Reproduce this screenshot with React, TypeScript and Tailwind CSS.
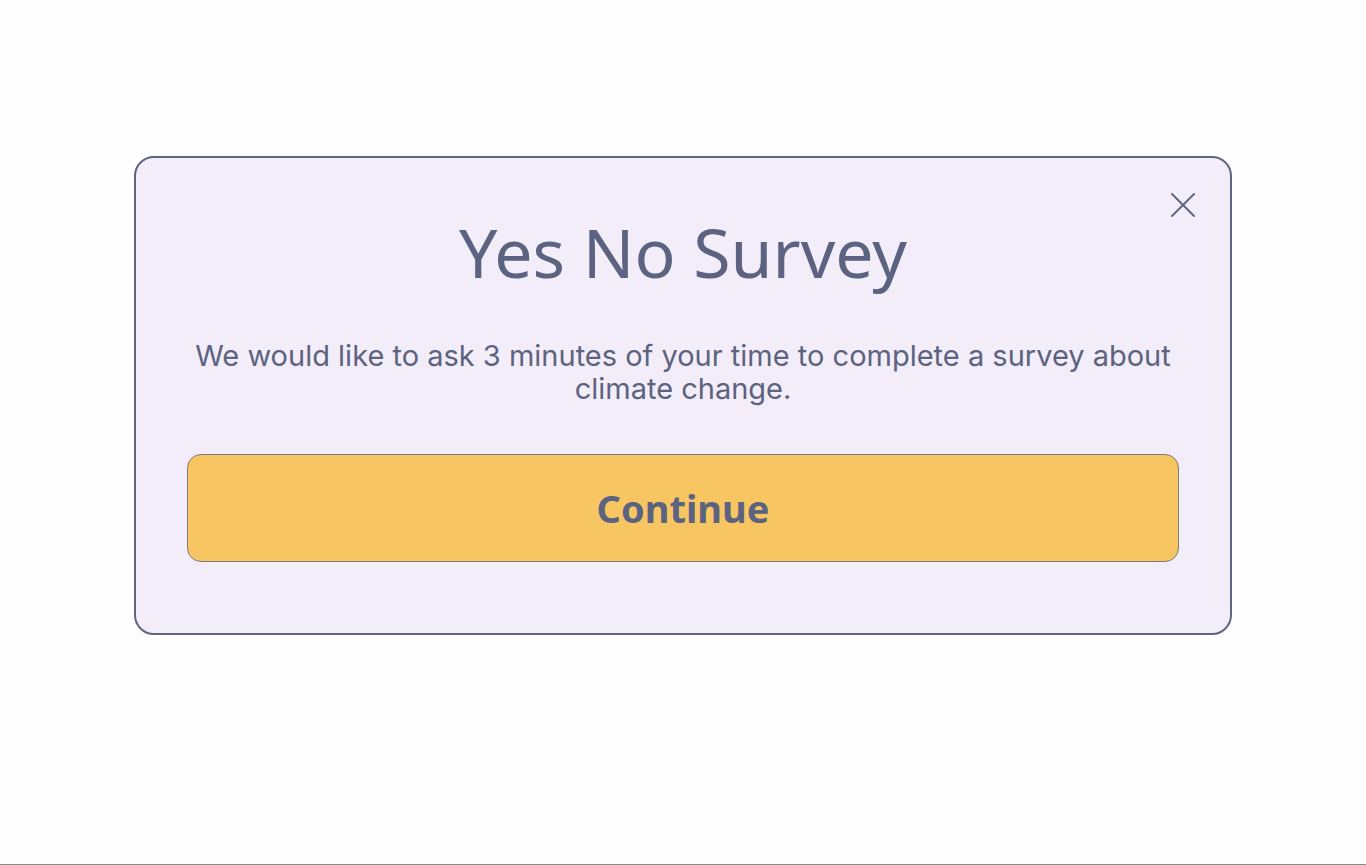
import { X } from "lucide-react";

export default function App() {
  return (
    <div className="w-full bg-[#fefefe] flex flex-col border-b border-[#8a8a8a]" style={{ height: 865 }}>
      <div className="flex justify-center pt-[156px]">
        <div className="relative w-[1098px] rounded-[20px] border-2 border-[#5f6680] bg-[#f3edf9] px-[51px] pt-[50px] pb-[71px]">
          <button className="absolute right-[25px] top-[25px] text-[#5f6680]">
            <X size={44} strokeWidth={1.1} />
          </button>
          <h1 className="text-center text-[68px] leading-[88px] text-[#5b6380] font-['Noto_Sans',sans-serif]">Yes No Survey</h1>
          <p className="mt-[43px] text-center text-[29px] leading-[33px] text-[#5b6380] font-['Inter',sans-serif]">
            We would like to ask 3 minutes of your time to complete a survey about climate change.
          </p>
          <button className="mt-[49px] flex h-[108px] w-full items-center justify-center rounded-[14px] border border-[#7a7a80] bg-[#f7c663] text-[38px] font-bold text-[#5b6380] font-['Noto_Sans',sans-serif]">
            Continue
          </button>
        </div>
      </div>
    </div>
  );
}
